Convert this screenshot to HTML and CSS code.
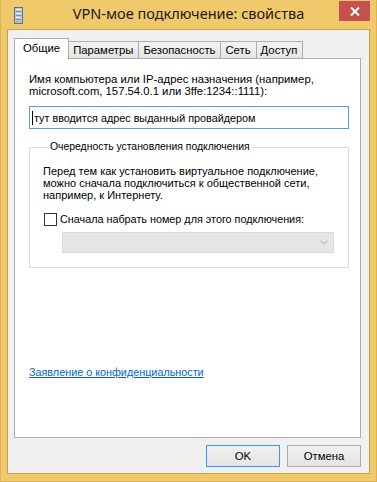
FILE: index.html
```html
<!DOCTYPE html>
<html lang="ru">
<head>
<meta charset="UTF-8">
<title>VPN-мое подключение: свойства</title>
<link rel="stylesheet" href="styles.css">
</head>
<body>
<div class="window">
    <div class="titlebar">
        <svg class="app-icon" width="9" height="17" viewBox="0 0 9 17">
            <rect x="0.5" y="0.5" width="8" height="16" fill="#b8c6d6" stroke="#5d7088"/>
            <rect x="2" y="2" width="5" height="1" fill="#eef3f8"/>
            <rect x="2" y="4" width="5" height="1" fill="#7d8fa5"/>
            <rect x="2" y="6" width="5" height="1" fill="#eef3f8"/>
            <rect x="2" y="8" width="5" height="1" fill="#7d8fa5"/>
            <rect x="2" y="10" width="5" height="1" fill="#eef3f8"/>
            <rect x="2" y="12" width="5" height="1" fill="#7d8fa5"/>
            <rect x="2" y="14" width="5" height="1" fill="#9fb0c4"/>
        </svg>
        <div class="title">VPN-мое подключение: свойства</div>
        <div class="close">
            <svg width="10" height="9" viewBox="0 0 10 9">
                <path d="M1 0.5 L9 8.5 M9 0.5 L1 8.5" stroke="#fff" stroke-width="2"/>
            </svg>
        </div>
    </div>

    <div class="client">
        <div class="tabs">
            <div class="tab active">Общие</div>
            <div class="tab">Параметры</div>
            <div class="tab">Безопасность</div>
            <div class="tab">Сеть</div>
            <div class="tab">Доступ</div>
        </div>

        <div class="panel">
            <p class="label">Имя компьютера или IP-адрес назначения (например,<br>microsoft.com, 157.54.0.1 или 3ffe:1234::1111):</p>
            <div class="input"><span class="caret"></span>тут вводится адрес выданный провайдером</div>

            <fieldset class="group">
                <legend>Очередность установления подключения</legend>
                <p class="note">Перед тем как установить виртуальное подключение,<br>можно сначала подключиться к общественной сети,<br>например, к Интернету.</p>
                <label class="check"><span class="box"></span>Сначала набрать номер для этого подключения:</label>
                <div class="select">
                    <svg width="8" height="5" viewBox="0 0 8 5">
                        <path d="M0.5 0.5 L4 4 L7.5 0.5" fill="none" stroke="#c2c2c2" stroke-width="1.2"/>
                    </svg>
                </div>
            </fieldset>

            <a class="privacy" href="#">Заявление о конфиденциальности</a>
        </div>

        <div class="buttons">
            <button class="btn default">OK</button>
            <button class="btn">Отмена</button>
        </div>
    </div>
</div>
</body>
</html>
```

FILE: styles.css
```css
body {
    margin: 0;
    font-family: 'Liberation Sans', Arial, sans-serif;
    font-size: 11.3px;
    color: #000;
}

.window {
    width: 377px;
    height: 482px;
    box-sizing: border-box;
    background: #f0c96b;
    border: 1px solid #dcb35a;
    border-top: none;
    display: flex;
    flex-direction: column;
}

.titlebar {
    height: 29px;
    flex-shrink: 0;
    display: grid;
    grid-template-columns: 1fr auto 1fr;
    align-items: start;
}

.app-icon {
    margin: 7px 0 0 13px;
}

.title {
    font-family: 'Noto Sans', sans-serif;
    font-size: 14.5px;
    line-height: 20px;
    margin-top: 3px;
    color: #1a1a1a;
}

.close {
    justify-self: end;
    width: 31px;
    height: 20px;
    margin: 1px 6px 0 0;
    background: #c75050;
    display: flex;
    align-items: center;
    justify-content: center;
}

.client {
    flex: 1;
    margin: 0 6px 7px 6px;
    border: 1px solid #c9a24b;
    background: #f0f0f0;
    display: flex;
    flex-direction: column;
    padding: 8px 8px 0 6px;
}

.tabs {
    display: flex;
    align-items: flex-end;
    height: 21px;
    margin-bottom: -1px;
}

.tab {
    height: 17px;
    line-height: 16px;
    padding: 0 5px 0 4px;
    border: 1px solid #acacac;
    border-bottom: none;
    margin-left: -1px;
    margin-bottom: 1px;
    background: linear-gradient(#f2f2f2, #e5e5e5);
    box-sizing: border-box;
}

.tab.active {
    height: 21px;
    line-height: 19px;
    padding: 0 8px;
    margin-left: 0;
    margin-bottom: 0;
    background: #fff;
    position: relative;
    z-index: 1;
}

.panel {
    flex: 1;
    background: #fff;
    border: 1px solid #acacac;
    padding: 14px 11px 0 14px;
}

.label {
    margin: 0;
    line-height: 12px;
}

.input {
    margin-top: 9px;
    height: 23px;
    box-sizing: border-box;
    border: 1px solid #569de5;
    display: flex;
    align-items: center;
    padding-left: 2px;
    font-size: 10.8px;
}

.caret {
    width: 1px;
    height: 14px;
    background: #000;
    margin-right: 1px;
}

.group {
    margin: 12px 0 0 0;
    padding: 0 14px 14px 13px;
    border: 1px solid #dcdcdc;
}

.group legend {
    margin-left: 5px;
    padding: 0 2px;
    line-height: 12px;
    font-size: 10.4px;
}

.note {
    margin: 12px 0 0 0;
    line-height: 12px;
    font-size: 11px;
}

.check {
    margin-top: 12px;
    display: flex;
    align-items: center;
    line-height: 13px;
    font-size: 10.8px;
}

.box {
    width: 13px;
    height: 13px;
    box-sizing: border-box;
    border: 1px solid #333;
    background: #fff;
    margin: 0 3px 0 1px;
}

.select {
    margin: 6px 0 0 19px;
    height: 21px;
    box-sizing: border-box;
    border: 1px solid #d9d9d9;
    background: #e6e6e6;
    display: flex;
    align-items: center;
    justify-content: flex-end;
    padding-right: 5px;
}

.privacy {
    display: inline-block;
    margin-top: 98px;
    color: #0066cc;
    line-height: 13px;
    font-size: 10.8px;
}

.buttons {
    display: flex;
    justify-content: flex-end;
    gap: 7px;
    padding: 7px 0 6px 0;
}

.btn {
    width: 74px;
    height: 22px;
    font-family: 'Liberation Sans', Arial, sans-serif;
    font-size: 11.3px;
    color: #000;
    border: 1px solid #acacac;
    background: linear-gradient(#f0f0f0, #e5e5e5);
    padding: 0;
}

.btn.default {
    border-color: #3399ff;
}
```
